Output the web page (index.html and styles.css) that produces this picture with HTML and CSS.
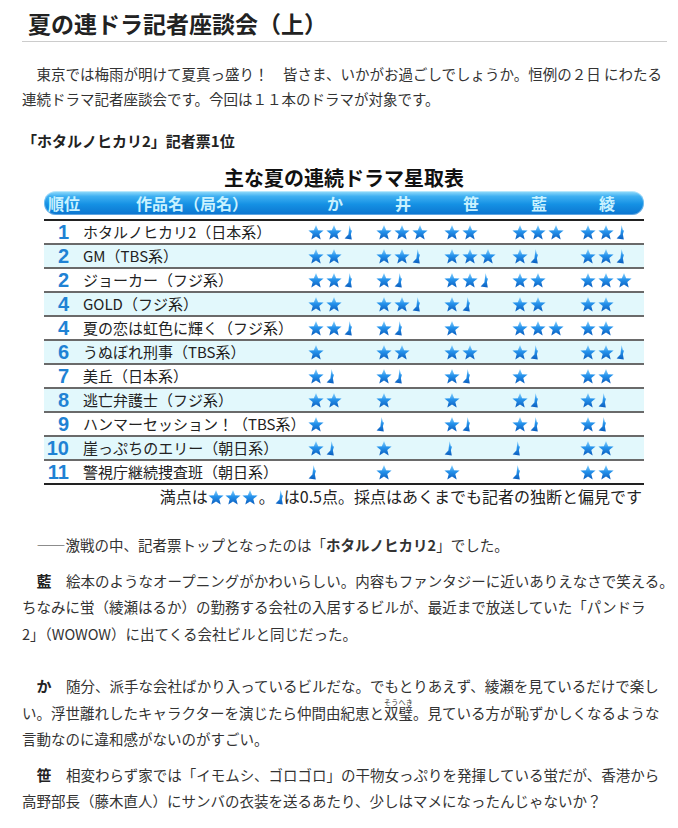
FILE: index.html
```html
<!DOCTYPE html>
<html lang="ja">
<head>
<meta charset="utf-8">
<title>夏の連ドラ記者座談会（上）</title>
<link rel="stylesheet" href="styles.css">
</head>
<body>
<svg class="defs" width="0" height="0" aria-hidden="true">
  <defs>
    <linearGradient id="sg" x1="0" y1="0" x2="0" y2="1">
      <stop offset="0" stop-color="#8fd6ff"/>
      <stop offset="0.45" stop-color="#2693ec"/>
      <stop offset="1" stop-color="#0a5cbd"/>
    </linearGradient>
    <symbol id="st" viewBox="0 0 16 15">
      <path d="M8 0 L10.1 5.2 L15.6 5.5 L11.3 9 L12.7 14.5 L8 11.4 L3.3 14.5 L4.7 9 L0.4 5.5 L5.9 5.2 Z" fill="url(#sg)"/>
    </symbol>
    <symbol id="hf" viewBox="0 0 8 15">
      <path d="M5.6 0 L6.9 5.3 L8 5.6 L6.9 9.2 L7.8 14.6 L0.6 13.4 L4.4 9.6 L4.9 5.2 Z" fill="url(#sg)"/>
    </symbol>
  </defs>
</svg>

<div class="page">
  <h1 class="title">夏の連ドラ記者座談会（上）</h1>

  <p class="intro">　東京では梅雨が明けて夏真っ盛り！　皆さま、いかがお過ごしでしょうか。恒例の２日 にわたる<br>連続ドラマ記者座談会です。今回は１１本のドラマが対象です。</p>

  <h2 class="sub">「ホタルノヒカリ2」記者票1位</h2>

  <div class="chart">
    <div class="chart-title">主な夏の連続ドラマ星取表</div>
    <div class="head">
      <span class="h-rank">順位</span>
      <span class="h-name">作品名（局名）</span>
      <span class="h-col">か</span>
      <span class="h-col">井</span>
      <span class="h-col">笹</span>
      <span class="h-col">藍</span>
      <span class="h-col">綾</span>
    </div>
    <div class="rows">
      <div class="row">
        <span class="rank">1</span><span class="name">ホタルノヒカリ2（日本系）</span>
        <span class="cell"><svg class="s"><use href="#st"/></svg><svg class="s"><use href="#st"/></svg><svg class="h"><use href="#hf"/></svg></span>
        <span class="cell"><svg class="s"><use href="#st"/></svg><svg class="s"><use href="#st"/></svg><svg class="s"><use href="#st"/></svg></span>
        <span class="cell"><svg class="s"><use href="#st"/></svg><svg class="s"><use href="#st"/></svg></span>
        <span class="cell"><svg class="s"><use href="#st"/></svg><svg class="s"><use href="#st"/></svg><svg class="s"><use href="#st"/></svg></span>
        <span class="cell"><svg class="s"><use href="#st"/></svg><svg class="s"><use href="#st"/></svg><svg class="h"><use href="#hf"/></svg></span>
      </div>
      <div class="row alt">
        <span class="rank">2</span><span class="name">GM（TBS系）</span>
        <span class="cell"><svg class="s"><use href="#st"/></svg><svg class="s"><use href="#st"/></svg></span>
        <span class="cell"><svg class="s"><use href="#st"/></svg><svg class="s"><use href="#st"/></svg><svg class="h"><use href="#hf"/></svg></span>
        <span class="cell"><svg class="s"><use href="#st"/></svg><svg class="s"><use href="#st"/></svg><svg class="s"><use href="#st"/></svg></span>
        <span class="cell"><svg class="s"><use href="#st"/></svg><svg class="h"><use href="#hf"/></svg></span>
        <span class="cell"><svg class="s"><use href="#st"/></svg><svg class="s"><use href="#st"/></svg><svg class="h"><use href="#hf"/></svg></span>
      </div>
      <div class="row">
        <span class="rank">2</span><span class="name">ジョーカー（フジ系）</span>
        <span class="cell"><svg class="s"><use href="#st"/></svg><svg class="s"><use href="#st"/></svg><svg class="h"><use href="#hf"/></svg></span>
        <span class="cell"><svg class="s"><use href="#st"/></svg><svg class="h"><use href="#hf"/></svg></span>
        <span class="cell"><svg class="s"><use href="#st"/></svg><svg class="s"><use href="#st"/></svg><svg class="h"><use href="#hf"/></svg></span>
        <span class="cell"><svg class="s"><use href="#st"/></svg><svg class="s"><use href="#st"/></svg></span>
        <span class="cell"><svg class="s"><use href="#st"/></svg><svg class="s"><use href="#st"/></svg><svg class="s"><use href="#st"/></svg></span>
      </div>
      <div class="row alt">
        <span class="rank">4</span><span class="name">GOLD（フジ系）</span>
        <span class="cell"><svg class="s"><use href="#st"/></svg><svg class="s"><use href="#st"/></svg></span>
        <span class="cell"><svg class="s"><use href="#st"/></svg><svg class="s"><use href="#st"/></svg><svg class="h"><use href="#hf"/></svg></span>
        <span class="cell"><svg class="s"><use href="#st"/></svg><svg class="h"><use href="#hf"/></svg></span>
        <span class="cell"><svg class="s"><use href="#st"/></svg><svg class="s"><use href="#st"/></svg></span>
        <span class="cell"><svg class="s"><use href="#st"/></svg><svg class="s"><use href="#st"/></svg></span>
      </div>
      <div class="row">
        <span class="rank">4</span><span class="name">夏の恋は虹色に輝く（フジ系）</span>
        <span class="cell"><svg class="s"><use href="#st"/></svg><svg class="s"><use href="#st"/></svg><svg class="h"><use href="#hf"/></svg></span>
        <span class="cell"><svg class="s"><use href="#st"/></svg><svg class="h"><use href="#hf"/></svg></span>
        <span class="cell"><svg class="s"><use href="#st"/></svg></span>
        <span class="cell"><svg class="s"><use href="#st"/></svg><svg class="s"><use href="#st"/></svg><svg class="s"><use href="#st"/></svg></span>
        <span class="cell"><svg class="s"><use href="#st"/></svg><svg class="s"><use href="#st"/></svg></span>
      </div>
      <div class="row alt">
        <span class="rank">6</span><span class="name">うぬぼれ刑事（TBS系）</span>
        <span class="cell"><svg class="s"><use href="#st"/></svg></span>
        <span class="cell"><svg class="s"><use href="#st"/></svg><svg class="s"><use href="#st"/></svg></span>
        <span class="cell"><svg class="s"><use href="#st"/></svg><svg class="s"><use href="#st"/></svg></span>
        <span class="cell"><svg class="s"><use href="#st"/></svg><svg class="h"><use href="#hf"/></svg></span>
        <span class="cell"><svg class="s"><use href="#st"/></svg><svg class="s"><use href="#st"/></svg><svg class="h"><use href="#hf"/></svg></span>
      </div>
      <div class="row">
        <span class="rank">7</span><span class="name">美丘（日本系）</span>
        <span class="cell"><svg class="s"><use href="#st"/></svg><svg class="h"><use href="#hf"/></svg></span>
        <span class="cell"><svg class="s"><use href="#st"/></svg><svg class="h"><use href="#hf"/></svg></span>
        <span class="cell"><svg class="s"><use href="#st"/></svg><svg class="h"><use href="#hf"/></svg></span>
        <span class="cell"><svg class="s"><use href="#st"/></svg></span>
        <span class="cell"><svg class="s"><use href="#st"/></svg><svg class="s"><use href="#st"/></svg></span>
      </div>
      <div class="row alt">
        <span class="rank">8</span><span class="name">逃亡弁護士（フジ系）</span>
        <span class="cell"><svg class="s"><use href="#st"/></svg><svg class="s"><use href="#st"/></svg></span>
        <span class="cell"><svg class="s"><use href="#st"/></svg></span>
        <span class="cell"><svg class="s"><use href="#st"/></svg></span>
        <span class="cell"><svg class="s"><use href="#st"/></svg><svg class="h"><use href="#hf"/></svg></span>
        <span class="cell"><svg class="s"><use href="#st"/></svg><svg class="h"><use href="#hf"/></svg></span>
      </div>
      <div class="row">
        <span class="rank">9</span><span class="name">ハンマーセッション！（TBS系）</span>
        <span class="cell"><svg class="s"><use href="#st"/></svg></span>
        <span class="cell"><svg class="h"><use href="#hf"/></svg></span>
        <span class="cell"><svg class="s"><use href="#st"/></svg><svg class="h"><use href="#hf"/></svg></span>
        <span class="cell"><svg class="s"><use href="#st"/></svg><svg class="h"><use href="#hf"/></svg></span>
        <span class="cell"><svg class="s"><use href="#st"/></svg><svg class="h"><use href="#hf"/></svg></span>
      </div>
      <div class="row alt">
        <span class="rank">10</span><span class="name">崖っぷちのエリー（朝日系）</span>
        <span class="cell"><svg class="s"><use href="#st"/></svg><svg class="h"><use href="#hf"/></svg></span>
        <span class="cell"><svg class="s"><use href="#st"/></svg></span>
        <span class="cell"><svg class="h"><use href="#hf"/></svg></span>
        <span class="cell"><svg class="h"><use href="#hf"/></svg></span>
        <span class="cell"><svg class="s"><use href="#st"/></svg><svg class="s"><use href="#st"/></svg></span>
      </div>
      <div class="row">
        <span class="rank">11</span><span class="name">警視庁継続捜査班（朝日系）</span>
        <span class="cell"><svg class="h"><use href="#hf"/></svg></span>
        <span class="cell"><svg class="s"><use href="#st"/></svg></span>
        <span class="cell"><svg class="s"><use href="#st"/></svg></span>
        <span class="cell"><svg class="h"><use href="#hf"/></svg></span>
        <span class="cell"><svg class="s"><use href="#st"/></svg><svg class="s"><use href="#st"/></svg></span>
      </div>
    </div>
    <div class="note">満点は<svg class="s"><use href="#st"/></svg><svg class="s"><use href="#st"/></svg><svg class="s"><use href="#st"/></svg>。<svg class="h"><use href="#hf"/></svg>は0.5点。採点はあくまでも記者の独断と偏見です</div>
  </div>

  <p class="talk first">　――激戦の中、記者票トップとなったのは「<b>ホタルノヒカリ2</b>」でした。</p>

  <p class="talk">　<b class="who">藍</b>　絵本のようなオープニングがかわいらしい。内容もファンタジーに近いありえなさで笑える。<br>ちなみに蛍（綾瀬はるか）の勤務する会社の入居するビルが、最近まで放送していた「パンドラ<br>2」（WOWOW）に出てくる会社ビルと同じだった。</p>

  <p class="talk wide">　<b class="who">か</b>　随分、派手な会社ばかり入っているビルだな。でもとりあえず、綾瀬を見ているだけで楽し<br>い。浮世離れしたキャラクターを演じたら仲間由紀恵と<ruby>双璧<rt>そうへき</rt></ruby>。見ている方が恥ずかしくなるような<br>言動なのに違和感がないのがすごい。</p>

  <p class="talk">　<b class="who">笹</b>　相変わらず家では「イモムシ、ゴロゴロ」の干物女っぷりを発揮している蛍だが、香港から<br>高野部長（藤木直人）にサンバの衣装を送るあたり、少しはマメになったんじゃないか？</p>
</div>
</body>
</html>
```

FILE: styles.css
```css
body {
  margin: 0;
  background: #ffffff;
  color: #333333;
  font-family: "Noto Sans CJK JP", sans-serif;
}

.defs {
  position: absolute;
  width: 0;
  height: 0;
  overflow: hidden;
}

.page {
  width: 645px;
  padding: 0 11px 0 22px;
}

.title {
  margin: 0;
  padding: 8px 0 3px 6px;
  font-size: 23px;
  line-height: 30px;
  font-weight: bold;
  color: #222222;
  border-bottom: 1px solid #cccccc;
}

.intro {
  margin: 19px 0 0;
  font-size: 14.5px;
  line-height: 25px;
  white-space: nowrap;
}

.sub {
  margin: 17px 0 0;
  font-size: 15px;
  line-height: 25px;
  font-weight: bold;
  color: #222222;
}

.chart {
  width: 600px;
  margin: 13px 0 0 22px;
}

.chart-title {
  text-align: center;
  font-size: 20px;
  line-height: 24px;
  font-weight: bold;
  color: #111111;
}

.head,
.row {
  display: grid;
  grid-template-columns: 36px 224px repeat(5, 68px);
  align-items: center;
}

.head {
  margin-top: 1px;
  height: 24px;
  border-radius: 12px;
  background: linear-gradient(to bottom, #9be0fc 0%, #3fb0f2 22%, #1591e4 55%, #0b74cf 100%);
  box-shadow: inset 0 0 0 1px rgba(255, 255, 255, 0.35);
  color: #c9f2ff;
  font-size: 16px;
  font-weight: bold;
  line-height: 24px;
}

.h-rank {
  padding-left: 4px;
  white-space: nowrap;
}

.h-name {
  text-align: center;
}

.h-col {
  text-align: center;
  padding-right: 6px;
}

.rows {
  margin-top: 4px;
  border-top: 2px solid #222222;
  border-bottom: 2px solid #222222;
}

.row {
  height: 22px;
  border-bottom: 2px solid #6a6a6a;
}

.row:last-child {
  border-bottom: none;
}

.row.alt {
  background: #e2f8fc;
}

.rank {
  text-align: right;
  padding-right: 11px;
  font-family: "Liberation Sans", Arial, sans-serif;
  font-size: 20px;
  font-weight: bold;
  color: #1f82d4;
  line-height: 22px;
}

.name {
  padding-left: 3px;
  font-size: 15px;
  line-height: 22px;
  color: #222222;
  white-space: nowrap;
}

.cell {
  display: flex;
  align-items: center;
  gap: 2px;
  padding-left: 4px;
  height: 22px;
}

.s {
  width: 16px;
  height: 15px;
  flex: none;
}

.h {
  width: 8px;
  height: 15px;
  flex: none;
}

.note {
  text-align: right;
  padding-right: 2px;
  font-size: 16px;
  line-height: 22px;
  color: #222222;
  white-space: nowrap;
}

.note .s,
.note .h {
  vertical-align: -2px;
  margin-right: 1px;
}

.talk {
  margin: 9px 0 0;
  font-size: 14.5px;
  line-height: 26.5px;
  white-space: nowrap;
}

.talk.first {
  margin-top: 25px;
}

.talk.wide {
  margin-top: 26px;
}

.who {
  font-size: 15px;
  color: #222222;
}

ruby rt {
  font-size: 7px;
  line-height: 7px;
}
```
